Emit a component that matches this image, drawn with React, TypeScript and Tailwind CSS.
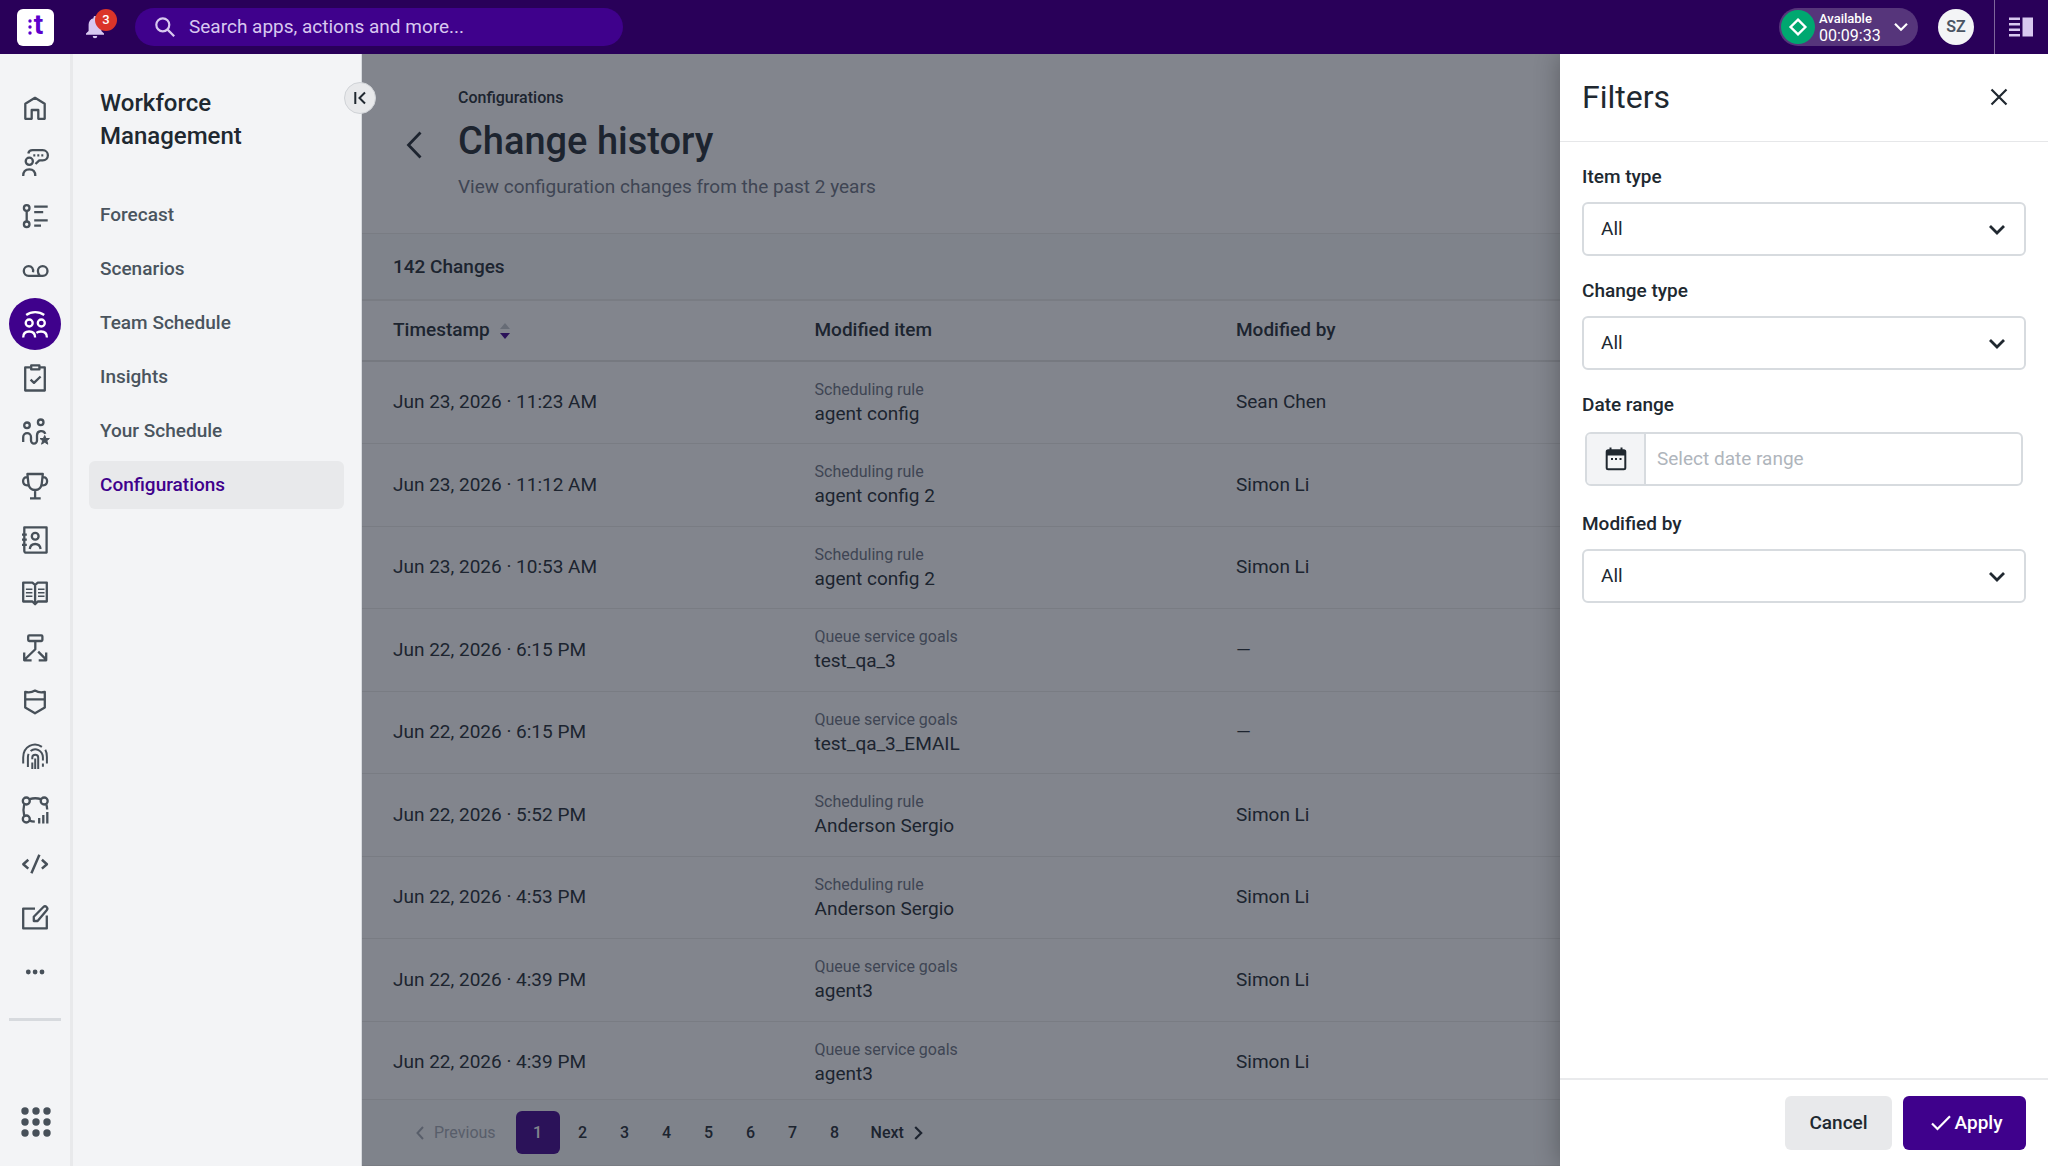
import type { ReactNode } from 'react'

const railIcons: { label: string; active?: boolean; icon: ReactNode }[] = [
  {
    label: 'Home',
    icon: <path d="M4.3 9.8 14 3.8l9.7 6v15h-6.4V16h-6.6v8.8H4.3z" />,
  },
  {
    label: 'Conversations',
    icon: (
      <>
        <circle cx="8.3" cy="13.3" r="3.6" />
        <path d="M2.2 28c0-4 2.2-6.6 6.1-6.6s6 2.6 6 6.6M7.3 5.5c.5-2.2 2.2-3.3 4.2-3.3h10.3a5 5 0 0 1 0 10.2h-3.5l-3.8 3.6" />
        <path d="M12.3 7.3h2m2 0h2m2 0h2" />
      </>
    ),
  },
  {
    label: 'Activities',
    icon: (
      <>
        <circle cx="5.7" cy="6" r="2.8" />
        <circle cx="5.7" cy="22.3" r="2.8" />
        <path d="M5.7 9v10.3M13.2 4.7h13.5M13.2 10.2h9M13.2 18.4h13.5M13.2 23.7H20" />
      </>
    ),
  },
  {
    label: 'Voicemail',
    icon: (
      <path d="M12 16.2c.8-3.5-1.3-6-4.4-6a4.8 4.8 0 0 0 0 9.6h14.2a4.8 4.8 0 1 0-4.9-4.8c0 1.8.6 3.2 1.8 4.4" />
    ),
  },
  {
    label: 'Workforce Management',
    active: true,
    icon: (
      <>
        <circle cx="8.2" cy="13" r="3.5" />
        <circle cx="20.3" cy="13" r="3.5" />
        <path d="M5.2 5c5-3.8 13-3.8 18 0M2.2 27.4c0-3.8 2.3-5.9 5.9-5.9s6 2.1 6 5.9M15.4 22.9c1.2-1 2.7-1.4 4.6-1.4 3.6 0 5.9 2.1 5.9 5.9" />
      </>
    ),
  },
  {
    label: 'Quality',
    icon: (
      <path d="M9 3.4H4.2v23.1h19.6V3.4H19M10.2 1.4h8.2v4h-8.2zM9.6 15.6l3.4 3.3 6.6-6.4" />
    ),
  },
  {
    label: 'Coaching',
    icon: (
      <>
        <circle cx="6" cy="7.3" r="2.8" />
        <circle cx="19.7" cy="4.3" r="2.8" />
        <path d="M2.2 24v-5a3.9 3.9 0 0 1 7.8 0v3.6a3 3 0 0 0 6 0v-5.4c0-5 6.8-5.4 8.3-1.4" />
        <path
          d="m23.7 17.5 1.3 3h3.4l-2.6 2.2 1 3.5-3.1-2-3.1 2 1-3.5-2.6-2.2h3.4z"
          fill="currentColor"
          strokeWidth="1"
        />
      </>
    ),
  },
  {
    label: 'Performance',
    icon: (
      <path d="M6.4 2h15.4l-1 9.4c-.5 4-3.1 6.6-6.7 6.6s-6.2-2.6-6.7-6.6zM14.1 18v8.2M9 26.4h10.7M6.8 5.3C3.6 4.8 2.1 6.6 2.1 9s1.5 4.3 4 4.3h1.5M21.4 5.3c3.2-.5 4.7 1.3 4.7 3.7s-1.5 4.3-4 4.3h-1.5" />
    ),
  },
  {
    label: 'Contacts',
    icon: (
      <>
        <path d="M3.3 1.4h22.3v25.2H5a1.7 1.7 0 0 1-1.7-1.7zM1 8.6h4.8M1 13.7h4.8M1 18.9h4.8" />
        <circle cx="14.2" cy="10.3" r="3.4" />
        <path d="M8.8 23c.4-3.5 2.2-5 5.4-5s5 1.5 5.4 5" />
      </>
    ),
  },
  {
    label: 'Knowledge',
    icon: (
      <>
        <path d="M2.2 2.6h9.2L14.1 5l2.7-2.4h9v18.9h-9l-2.7 2.7-2.7-2.7H2.2zM14.1 5v18" />
        <path
          d="M4.9 9.2h6.5M4.9 12.7h6.5M4.9 16.3h6.5M17 9.2h6.5M17 12.7h6.5M17 16.3h6.5"
          strokeWidth="1.5"
        />
      </>
    ),
  },
  {
    label: 'Routing',
    icon: (
      <>
        <rect x="7.2" y="1.4" width="14.2" height="5.6" rx="1" />
        <path d="M14.3 7v8.2L3.2 26M3.2 18.5v7.8h7.4M17.2 17.6l8 8M25.2 18.5v7.8h-7.5" />
      </>
    ),
  },
  {
    label: 'Guardian',
    icon: (
      <path d="M4.2 3.8c3.6 1 7 .4 9.800-1.200 2.800 1.600 6.200 2.200 9.800 1.200v15.700L14 25.300l-9.800-5.800zM4.200 11.300h19.600" />
    ),
  },
  {
    label: 'Identity',
    icon: (
      <path
        d="M2.2 21.5v-6C2.2 4.6 13-.8 20.9 4.9M24.3 7.800c1.200 2 1.600 4.200 1.600 7.200v6.500M6.900 25v-9.500c0-1.500.2-2.600.7-3.600M9.600 9c4.900-4.200 12-.4 12.300 6.200v3.400M21.900 21.500v3.300M11.300 17.300v-1.800c0-3.600 5.900-3.600 5.900 0V27M11.300 20.500V27M14.200 16.500V27"
        strokeWidth="2"
      />
    ),
  },
  {
    label: 'Analytics',
    icon: (
      <>
        <circle cx="5.3" cy="5" r="3.5" />
        <circle cx="23.2" cy="5" r="3.5" />
        <circle cx="5.3" cy="23" r="3.5" />
        <path d="M8.5 3.200c3.600-1.200 7.900-1.200 11.500 0M3.200 8.200c-1 3.900-1 7.800 0 11.600M25.300 8.500c.6 1.600.8 3 .9 5M8.500 24.600c1.600.6 3.200.9 5.300 1M18.200 22v5.500M22.300 19v8.500M26.300 16v11.500" />
      </>
    ),
  },
  {
    label: 'Developers',
    icon: (
      <path
        d="m7.3 9.8-5 4.4 5 4.4M20.9 9.8l5 4.4-5 4.4M18.4 4.8l-8 18.4"
        strokeWidth="2.5"
      />
    ),
  },
  {
    label: 'Forms',
    icon: (
      <path d="M14 4.600H2.200v19.800h23.600V11.500M12.800 17v-4.200L22.400 3a2.300 2.300 0 0 1 3.300 3.200L16.600 17z" />
    ),
  },
  {
    label: 'More',
    icon: (
      <g fill="currentColor" stroke="none">
        <circle cx="7.3" cy="14" r="2.4" />
        <circle cx="14.1" cy="14" r="2.4" />
        <circle cx="21" cy="14" r="2.4" />
      </g>
    ),
  },
]

const navItems = [
  'Forecast',
  'Scenarios',
  'Team Schedule',
  'Insights',
  'Your Schedule',
  'Configurations',
]

const changes = [
  { time: 'Jun 23, 2026 · 11:23 AM', kind: 'Scheduling rule', item: 'agent config', by: 'Sean Chen' },
  { time: 'Jun 23, 2026 · 11:12 AM', kind: 'Scheduling rule', item: 'agent config 2', by: 'Simon Li' },
  { time: 'Jun 23, 2026 · 10:53 AM', kind: 'Scheduling rule', item: 'agent config 2', by: 'Simon Li' },
  { time: 'Jun 22, 2026 · 6:15 PM', kind: 'Queue service goals', item: 'test_qa_3', by: '—' },
  { time: 'Jun 22, 2026 · 6:15 PM', kind: 'Queue service goals', item: 'test_qa_3_EMAIL', by: '—' },
  { time: 'Jun 22, 2026 · 5:52 PM', kind: 'Scheduling rule', item: 'Anderson Sergio', by: 'Simon Li' },
  { time: 'Jun 22, 2026 · 4:53 PM', kind: 'Scheduling rule', item: 'Anderson Sergio', by: 'Simon Li' },
  { time: 'Jun 22, 2026 · 4:39 PM', kind: 'Queue service goals', item: 'agent3', by: 'Simon Li' },
  { time: 'Jun 22, 2026 · 4:39 PM', kind: 'Queue service goals', item: 'agent3', by: 'Simon Li' },
]

function TopBar() {
  return (
    <header className="h-[54px] shrink-0 flex items-center bg-[#290059] text-white">
      <a
        href="#"
        aria-label="Home page"
        className="ml-[17px] size-[37px] rounded-md bg-white flex items-center justify-center gap-0.5 text-[#5c00cc]"
      >
        <svg width="4" height="16" viewBox="0 0 4 16" fill="currentColor">
          <circle cx="2" cy="2" r="1.700" />
          <circle cx="2" cy="8" r="1.700" />
          <circle cx="2" cy="14" r="1.700" />
        </svg>
        <span className="pb-1 text-[28px] leading-7 font-bold">t</span>
      </a>

      <button aria-label="Notifications" className="relative ml-[31px] w-5 h-6">
        <svg width="20" height="24" viewBox="0 0 20 24" fill="#d8c8f0">
          <path d="M10 1c.9 0 1.500.7 1.500 1.500v.7c3 .7 4.900 3.200 4.900 6.400V16l2.600 2.600v1.200H1v-1.200L3.600 16V9.600c0-3.200 1.900-5.700 4.900-6.400v-.7C8.500 1.700 9.100 1 10 1zM7.700 21h4.600a2.300 2.300 0 0 1-4.600 0z" />
        </svg>
        <span className="absolute -top-1.5 left-2.5 size-[22px] rounded-full bg-[#db3429] text-[13px] leading-[22px] font-medium">
          3
        </span>
      </button>

      <label className="ml-[30px] w-[488px] h-[38px] pl-5 pr-4 rounded-full bg-[#3f018c] flex items-center gap-3.5">
        <svg width="20" height="20" viewBox="0 0 20 20" fill="none" stroke="#d8c8f0" strokeWidth="2.2">
          <circle cx="7.8" cy="7.8" r="6.5" />
          <path d="m12.6 12.6 6.6 6.6" />
        </svg>
        <input
          aria-label="Search"
          placeholder="Search apps, actions and more..."
          className="flex-1 min-w-0 bg-transparent text-[19px] outline-none placeholder:text-[#d8c8f0]"
        />
      </label>

      <div className="ml-auto h-full flex items-center">
        <button className="w-[139px] h-[38px] pl-[2px] rounded-full bg-[#56357b] flex items-center text-left">
          <span className="size-[34px] rounded-full bg-[#00a870] flex items-center justify-center">
            <svg width="20" height="20" viewBox="0 0 20 20" fill="none" stroke="#fff" strokeWidth="2.4">
              <path d="m10 2.600 7.400 7.400-7.400 7.400L2.600 10z" />
            </svg>
          </span>
          <span className="ml-1 pt-px flex flex-col">
            <span className="text-[13px] leading-4 font-medium">Available</span>
            <span className="text-base leading-[18px]">00:09:33</span>
          </span>
          <svg
            className="ml-auto mr-2.5"
            width="14"
            height="10"
            viewBox="0 0 14 10"
            fill="none"
            stroke="#fff"
            strokeWidth="2.2"
          >
            <path d="m1 1.800 6 6 6-6" />
          </svg>
        </button>
        <button className="ml-5 size-9 rounded-full bg-[#f3f4f6] text-base font-semibold text-[#4b5563]">
          SZ
        </button>
        <div className="ml-5 h-full flex items-center pl-3.5 pr-[15px] border-l border-[#7f669b]">
          <button aria-label="Toggle side panel">
            <svg width="24" height="20" viewBox="0 0 24 20" fill="#d8c8f0" className="block">
              <path d="M0 .5h11V3H0zM0 6h11v2.500H0zM0 11.500h11V14H0zM0 17h11v2.500H0zM13.500.5H24v19H13.500z" />
            </svg>
          </button>
        </div>
      </div>
    </header>
  )
}

function Rail() {
  return (
    <nav
      aria-label="Apps"
      className="w-[73px] shrink-0 flex flex-col items-center pt-7 pb-[29px] bg-[#f3f4f6] border-r-[3px] border-[#e8e9eb] text-[#475059]"
    >
      <ul className="flex flex-col gap-0.5">
        {railIcons.map(({ label, icon, active }) => (
          <li key={label}>
            <a
              href="#"
              aria-label={label}
              className={
                active
                  ? 'size-[52px] rounded-full flex items-center justify-center bg-[#3f018c] text-white'
                  : 'size-[52px] rounded-full flex items-center justify-center'
              }
            >
              <svg
                width="28"
                height="28"
                viewBox="0 0 28 28"
                fill="none"
                stroke="currentColor"
                strokeWidth="2.3"
                strokeLinejoin="round"
                overflow="visible"
              >
                {icon}
              </svg>
            </a>
          </li>
        ))}
      </ul>
      <div className="mt-5 w-[52px] h-[3px] bg-[#d7dade]" />
      <button aria-label="All apps" className="mt-auto ml-0.5">
        <svg width="30" height="30" viewBox="0 0 30 30" fill="currentColor" className="block">
          {[4, 15, 26].map((y) =>
            [4, 15, 26].map((x) => <circle key={`${x}-${y}`} cx={x} cy={y} r="3.7" />),
          )}
        </svg>
      </button>
    </nav>
  )
}

function SideMenu() {
  return (
    <aside className="relative z-10 w-[289px] shrink-0 pt-[33px] pl-4 pr-[17px] bg-[#f3f4f6] border-r border-[#d7dade]">
      <h2 className="pl-[11px] w-48 text-2xl leading-[33px] font-medium text-[#202830]">
        Workforce Management
      </h2>
      <ul className="mt-[38px] flex flex-col gap-1.5">
        {navItems.map((item) => (
          <li key={item}>
            <a
              href="#"
              className={
                item === 'Configurations'
                  ? 'h-12 px-[11px] rounded-md flex items-center text-[19px] font-medium bg-[#e8e9eb] text-[#3f018c]'
                  : 'h-12 px-[11px] rounded-md flex items-center text-[19px] font-medium text-[#4a545e]'
              }
            >
              {item}
            </a>
          </li>
        ))}
      </ul>
      <button
        aria-label="Collapse menu"
        className="absolute top-7 -right-[15px] size-8 rounded-full bg-[#e8e9eb] border border-[#d0d3d7] flex items-center justify-center"
      >
        <svg width="12" height="14" viewBox="0 0 12 14" fill="none" stroke="#202830" strokeWidth="2">
          <path d="M1.300 1v12M11 1.500 5.500 7l5.500 5.500" />
        </svg>
      </button>
    </aside>
  )
}

function ChangeHistory() {
  return (
    <main className="flex-1 min-w-0 flex flex-col text-[#202830]">
      <div className="h-[180px] shrink-0 flex pl-[43px] pt-[33px] border-b border-[#eaebe8]">
        <a href="#" aria-label="Back" className="mt-11">
          <svg width="18" height="28" viewBox="0 0 18 28" fill="none" stroke="currentColor" strokeWidth="2.8">
            <path d="M15.500 1.500 3.500 14l12 12.500" />
          </svg>
        </a>
        <div className="ml-[35px]">
          <p className="text-base leading-[22px] font-medium">Configurations</p>
          <h1 className="mt-2 text-[38px] leading-[48px] font-medium">Change history</h1>
          <p className="mt-2 text-[19px] leading-7 text-[#6b7280]">
            View configuration changes from the past 2 years
          </p>
        </div>
      </div>

      <h2 className="h-[67px] shrink-0 pt-px pl-[31px] flex items-center text-[19px] font-medium bg-[#f9fafb] border-b-2 border-[#eaebe8]">
        142 Changes
      </h2>

      <div className="flex-1 min-h-0 overflow-hidden">
        <table className="w-full table-fixed border-separate border-spacing-0 text-left text-[19px]">
          <thead>
            <tr className="h-[61px]">
              <th className="pl-[31px] font-medium border-b-2 border-[#e4e5e2]">
                <button className="flex items-center gap-2.5">
                  Timestamp
                  <svg width="10" height="16" viewBox="0 0 10 16">
                    <path d="M5 0l5 6H0z" fill="#c3c7cc" />
                    <path d="M5 16l5-6H0z" fill="#3f018c" />
                  </svg>
                </button>
              </th>
              <th className="pl-[31px] font-medium border-b-2 border-[#e4e5e2]">Modified item</th>
              <th className="pl-[31px] font-medium border-b-2 border-[#e4e5e2]">Modified by</th>
              <td className="border-b-2 border-[#e4e5e2]" />
            </tr>
          </thead>
          <tbody>
            {changes.map(({ time, kind, item, by }, i) => (
              <tr key={i} className="h-[82px] even:h-[83px]">
                <td className="pl-[31px] border-b border-[#eaebe8]">{time}</td>
                <td className="pl-[31px] pb-0.5 border-b border-[#eaebe8]">
                  <p className="text-base leading-6 text-[#6b7280]">{kind}</p>
                  <p className="leading-6">{item}</p>
                </td>
                <td className="pl-[31px] border-b border-[#eaebe8]">{by}</td>
                <td className="border-b border-[#eaebe8]" />
              </tr>
            ))}
          </tbody>
        </table>
      </div>

      <nav
        aria-label="Pagination"
        className="h-[67px] shrink-0 pl-[54px] flex items-center bg-[#f9fafb] border-y border-[#eaebe8] text-base font-medium"
      >
        <button disabled className="mr-5 flex items-center gap-2.5 font-normal text-[#a3a9b1]">
          <svg width="8" height="14" viewBox="0 0 8 14" fill="none" stroke="currentColor" strokeWidth="2">
            <path d="M7 1 1.500 7 7 13" />
          </svg>
          Previous
        </button>
        <button className="mr-0.5 w-11 h-[43px] rounded-md bg-[#3f018c] text-white">1</button>
        {[2, 3, 4, 5, 6, 7, 8].map((page) => (
          <button key={page} className="w-[42px] h-[43px]">
            {page}
          </button>
        ))}
        <button className="ml-[15px] flex items-center gap-2.5">
          Next
          <svg width="9" height="14" viewBox="0 0 9 14" fill="none" stroke="currentColor" strokeWidth="2.2">
            <path d="m1.200 1 6 6-6 6" />
          </svg>
        </button>
      </nav>
    </main>
  )
}

function SelectField({ id, label }: { id: string; label: string }) {
  return (
    <div className="flex flex-col gap-[11px]">
      <label htmlFor={id} className="text-[19px] leading-7 font-medium">
        {label}
      </label>
      <div className="relative">
        <select
          id={id}
          className="block w-full h-[54px] pl-[17px] appearance-none bg-white rounded-md border-2 border-[#d7dbdf] text-[19px]"
        >
          <option>All</option>
        </select>
        <svg
          className="absolute right-5 top-[22px] pointer-events-none"
          width="18"
          height="12"
          viewBox="0 0 18 12"
          fill="none"
          stroke="currentColor"
          strokeWidth="2.8"
        >
          <path d="m2 2 7 7 7-7" />
        </svg>
      </div>
    </div>
  )
}

function FiltersDrawer() {
  return (
    <section
      aria-label="Filters"
      className="absolute inset-y-0 right-0 w-[488px] flex flex-col bg-white text-[#202830] shadow-[0_0_24px_rgba(0,0,0,0.3)]"
    >
      <div className="h-[88px] shrink-0 pl-[22px] pr-10 pb-0.5 flex items-center justify-between border-b border-[#e6e7e9]">
        <h2 className="text-[32px] leading-10">Filters</h2>
        <button aria-label="Close">
          <svg width="18" height="18" viewBox="0 0 18 18" fill="none" stroke="currentColor" strokeWidth="2.2">
            <path d="m1.500 1.500 15 15M16.500 1.500l-15 15" />
          </svg>
        </button>
      </div>

      <form className="flex-1 px-[22px] pt-[21px] flex flex-col gap-[21px]">
        <SelectField id="item-type" label="Item type" />
        <SelectField id="change-type" label="Change type" />
        <div className="flex flex-col gap-2.5">
          <label htmlFor="date-range" className="text-[19px] leading-7 font-medium">
            Date range
          </label>
          <div className="p-[3px]">
            <div className="h-[54px] flex rounded-md border-2 border-[#d7dbdf] overflow-hidden">
              <span className="w-[59px] shrink-0 flex items-center justify-center bg-[#f3f4f6] border-r-2 border-[#d7dbdf]">
                <svg width="22" height="24" viewBox="0 0 22 24" fill="none" stroke="currentColor">
                  <rect x="1.7" y="3.2" width="18.6" height="19" rx="1.5" strokeWidth="2" />
                  <path d="M1.500 6h19" strokeWidth="5" />
                  <path d="M5.500.500v3M16.500.500v3M6 12h2M10 12h2M14.500 12h2" strokeWidth="2" />
                </svg>
              </span>
              <input
                id="date-range"
                placeholder="Select date range"
                className="flex-1 min-w-0 px-[11px] text-[19px] outline-none placeholder:text-[#afb5bc]"
              />
            </div>
          </div>
        </div>
        <SelectField id="modified-by" label="Modified by" />
      </form>

      <div className="h-[88px] shrink-0 pr-[22px] flex items-center justify-end gap-[11px] border-t-2 border-[#e9eaec] text-[19px] font-medium">
        <button className="w-[107px] h-[54px] rounded-md bg-[#e8e9eb]">Cancel</button>
        <button className="w-[123px] h-[54px] pl-1 rounded-md bg-[#3f018c] text-white flex items-center justify-center gap-1">
          <svg width="20" height="16" viewBox="0 0 20 16" fill="none" stroke="currentColor" strokeWidth="2.2">
            <path d="m1 8.500 5.500 5.500L19 1.200" />
          </svg>
          Apply
        </button>
      </div>
    </section>
  )
}

export default function App() {
  return (
    <div className="h-screen flex flex-col overflow-hidden bg-white font-['Roboto',sans-serif]">
      <TopBar />
      <div className="flex-1 min-h-0 flex">
        <Rail />
        <SideMenu />
        <div className="relative flex-1 min-w-0 flex overflow-hidden">
          <ChangeHistory />
          <div className="absolute inset-0 bg-[#1b212f]/55" />
          <FiltersDrawer />
        </div>
      </div>
    </div>
  )
}
